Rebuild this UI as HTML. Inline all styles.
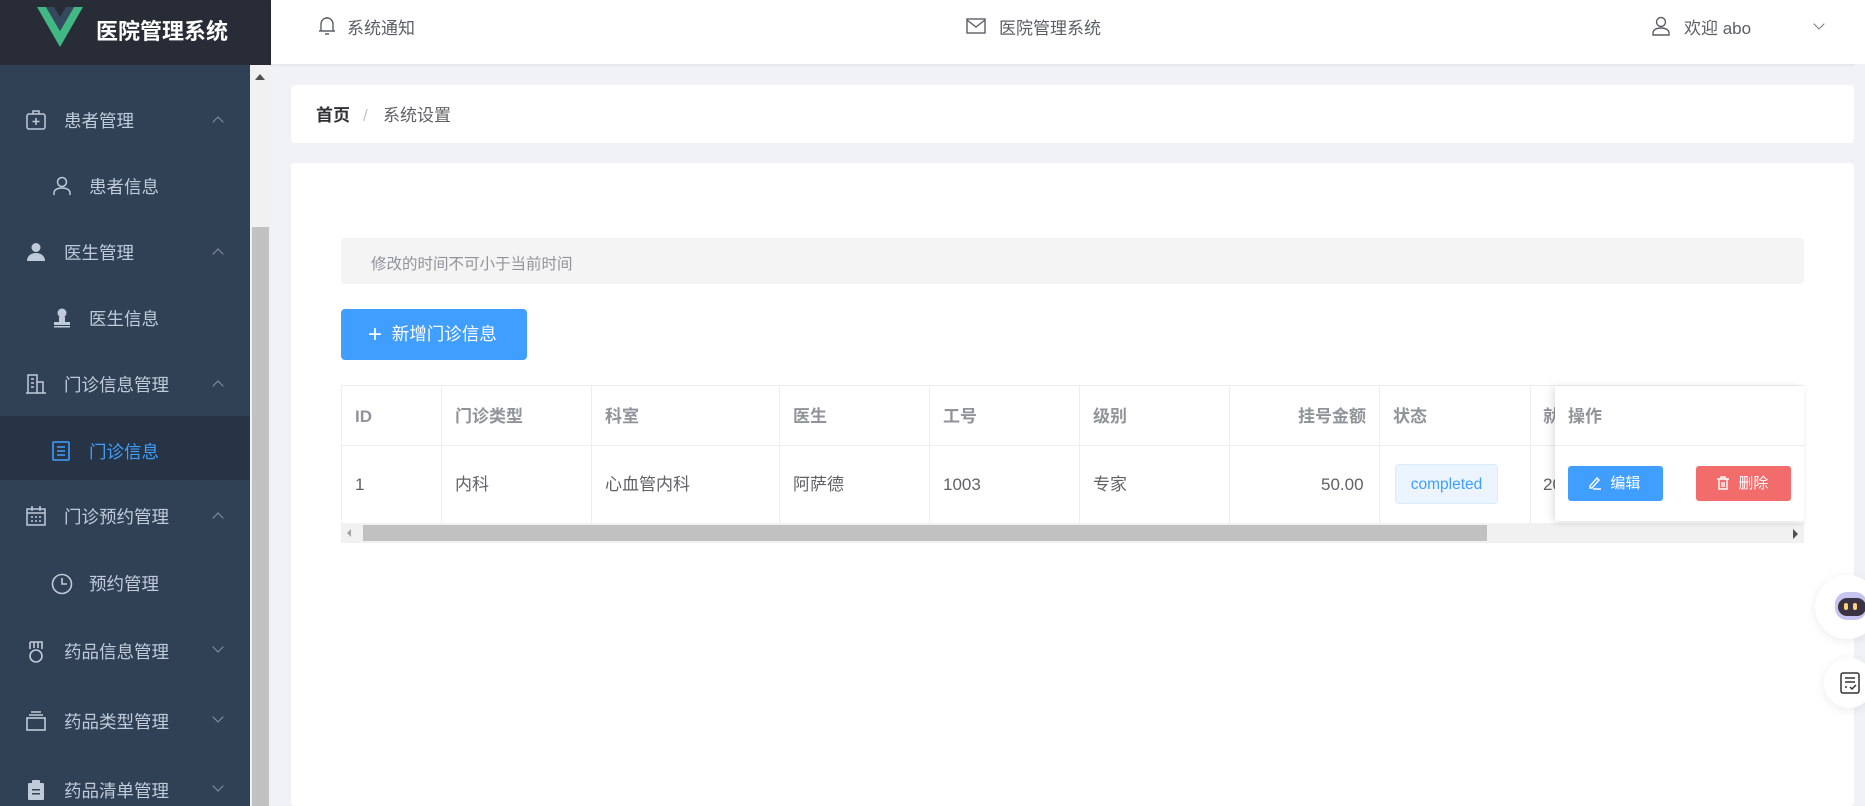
<!DOCTYPE html>
<html><head><meta charset="utf-8"><style>
*{margin:0;padding:0;box-sizing:border-box}
body{width:1865px;height:806px;overflow:hidden;background:#f0f2f5;font-family:"Liberation Sans","Noto Sans CJK SC",sans-serif;position:relative}
.abs{position:absolute}
.side{left:0;top:0;width:271px;height:806px;background:#304156}
.logo{left:0;top:0;width:271px;height:65px;background:#282c37}
.logo .t{left:96px;top:14px;color:#fff;font-weight:bold;font-size:22px;white-space:nowrap}
.mi{position:absolute;left:0;width:250px;color:#bfcbd9;font-size:17.5px;white-space:nowrap}
.mi span{position:absolute;top:-11px;line-height:24px}
.mi svg{position:absolute;top:-10px}
.arr{position:absolute;left:214px;top:-6px;width:8px;height:8px;border-left:1.2px solid #8a96a6;border-top:1.2px solid #8a96a6}
.up{transform:rotate(45deg);top:-2px}
.dn{transform:rotate(225deg);top:-8px}
.hdr{left:271px;top:0;width:1594px;height:64px;background:#fff;box-shadow:0 1px 4px rgba(0,21,41,.08)}
.ht{color:#5a5e66;font-size:17px;white-space:nowrap;line-height:24px;top:17px}
.card{background:#fff;border-radius:4px}
.th{position:absolute;top:405px;line-height:24px;font-weight:bold;color:#909399;font-size:17px;white-space:nowrap}
.td{position:absolute;top:473px;line-height:24px;color:#606266;font-size:17px;white-space:nowrap}
.vl{position:absolute;top:385px;width:1px;height:138px;background:#ebeef5}
</style></head><body>
<div class="abs side"></div>
<div class="abs logo">
<svg class="abs" style="left:37px;top:7px" width="46" height="40" viewBox="0 0 46 40"><polygon points="0,0 9,0 23,24 37,0 46,0 23,40" fill="#41b883"/><polygon points="9,0 17,0 23,10 29,0 37,0 23,24" fill="#35495e"/></svg>
<div class="abs t">医院管理系统</div></div>
<div class="abs" style="left:250px;top:65px;width:21px;height:741px;background:#f1f1f1"></div>
<div class="abs" style="left:252px;top:227px;width:17px;height:579px;background:#c1c1c1"></div>
<div class="abs" style="left:255px;top:74px;width:0;height:0;border-left:5px solid transparent;border-right:5px solid transparent;border-bottom:6px solid #505050"></div>
<div class="abs" style="left:0;top:416px;width:250px;height:64px;background:#263445"></div>
<div class="mi" style="top:120px"><svg style="left:26px" width="20" height="20" viewBox="0 0 20 20" fill="none" stroke="#bfcbd9" stroke-width="1.5"><rect x="1" y="4" width="18" height="15" rx="2"/><path d="M7 4V1h6v3M10 8v7M6.5 11.5h7"/></svg><span style="left:64px">患者管理</span><i class="arr up"></i></div>
<div class="mi" style="top:186px"><svg style="left:52px" width="20" height="20" viewBox="0 0 20 20" fill="none" stroke="#bfcbd9" stroke-width="1.5"><circle cx="10" cy="6" r="4.5"/><path d="M2 19v-2c0-3 3-5 8-5s8 2 8 5v2"/></svg><span style="left:89px">患者信息</span></div>
<div class="mi" style="top:252px"><svg style="left:26px" width="20" height="20" viewBox="0 0 20 20" fill="#bfcbd9"><circle cx="10" cy="5.5" r="4.5"/><path d="M1 19c0-5 4-8 9-8s9 3 9 8z"/></svg><span style="left:64px">医生管理</span><i class="arr up"></i></div>
<div class="mi" style="top:318px"><svg style="left:52px" width="20" height="20" viewBox="0 0 20 20" fill="#bfcbd9"><circle cx="10" cy="5" r="4.5"/><rect x="7" y="9" width="6" height="5"/><rect x="2" y="14" width="16" height="3"/><rect x="2" y="18" width="16" height="1.5"/></svg><span style="left:89px">医生信息</span></div>
<div class="mi" style="top:384px"><svg style="left:26px" width="20" height="20" viewBox="0 0 20 20" fill="none" stroke="#bfcbd9" stroke-width="1.5"><path d="M2 19V1h9v18M11 8h6v11M0 19h20M5 5h3M5 9h3M5 13h3"/></svg><span style="left:64px">门诊信息管理</span><i class="arr up"></i></div>
<div class="mi" style="top:451px;color:#409eff"><svg style="left:52px" width="18" height="20" viewBox="0 0 18 20" fill="none" stroke="#409eff" stroke-width="1.6"><rect x="1" y="1" width="16" height="18" rx="1"/><path d="M5 6h8M5 10h8M5 14h8"/></svg><span style="left:89px">门诊信息</span></div>
<div class="mi" style="top:516px"><svg style="left:26px" width="20" height="20" viewBox="0 0 20 20" fill="none" stroke="#bfcbd9" stroke-width="1.5"><rect x="1" y="3" width="18" height="16"/><path d="M1 7h18M6 0v5M14 0v5M5 11h2M9 11h2M13 11h2M5 15h2M9 15h2M13 15h2"/></svg><span style="left:64px">门诊预约管理</span><i class="arr up"></i></div>
<div class="mi" style="top:583px"><svg style="left:51px" width="22" height="22" viewBox="0 0 22 22" fill="none" stroke="#bfcbd9" stroke-width="1.6"><circle cx="11" cy="11" r="9.5"/><path d="M11 5v6h5"/></svg><span style="left:89px">预约管理</span></div>
<div class="mi" style="top:651px"><svg style="left:28px" width="16" height="22" viewBox="0 0 16 22" fill="none" stroke="#bfcbd9" stroke-width="1.6"><path d="M2 1h12v7M2 1v7M6 1v6M10 1v6"/><circle cx="8" cy="15" r="6"/></svg><span style="left:64px">药品信息管理</span><i class="arr dn"></i></div>
<div class="mi" style="top:721px"><svg style="left:26px" width="20" height="20" viewBox="0 0 20 20" fill="none" stroke="#bfcbd9" stroke-width="1.6"><path d="M5 1h10M3 4h14"/><rect x="1" y="7" width="18" height="12"/></svg><span style="left:64px">药品类型管理</span><i class="arr dn"></i></div>
<div class="mi" style="top:790px"><svg style="left:28px" width="16" height="20" viewBox="0 0 16 20" fill="#bfcbd9"><rect x="0" y="3" width="16" height="17" rx="1"/><rect x="4" y="0" width="8" height="5" rx="1"/><path d="M4 9h8v1.5H4zM4 13h8v1.5H4z" fill="#304156"/></svg><span style="left:64px">药品清单管理</span><i class="arr dn"></i></div>
<div class="abs hdr"></div>
<svg class="abs" style="left:318px;top:16px" width="18" height="20" viewBox="0 0 18 20" fill="none" stroke="#5a5e66" stroke-width="1.4"><path d="M3 15V8a6 6 0 0 1 12 0v7M1 15h16M7 18h4M9 1v1"/></svg>
<div class="abs ht" style="left:347px">系统通知</div>
<svg class="abs" style="left:966px;top:18px" width="20" height="16" viewBox="0 0 20 16" fill="none" stroke="#5a5e66" stroke-width="1.4"><rect x="1" y="1" width="18" height="14"/><path d="M1 2l9 7 9-7"/></svg>
<div class="abs ht" style="left:999px">医院管理系统</div>
<svg class="abs" style="left:1652px;top:16px" width="18" height="20" viewBox="0 0 18 20" fill="none" stroke="#5a5e66" stroke-width="1.4"><circle cx="9" cy="6" r="4.5"/><path d="M1 19v-2c0-3 3-5 8-5s8 2 8 5v2z"/></svg>
<div class="abs ht" style="left:1684px">欢迎 abo</div>
<div class="abs" style="left:1815px;top:20px;width:8px;height:8px;border-right:1.2px solid #777;border-bottom:1.2px solid #777;transform:rotate(45deg)"></div>
<div class="abs card" style="left:291px;top:85px;width:1563px;height:58px"></div>
<div class="abs" style="left:316px;top:104px;line-height:24px;font-size:17px;font-weight:bold;color:#303133">首页</div>
<div class="abs" style="left:363px;top:104px;line-height:24px;font-size:17px;color:#c0c4cc">/</div>
<div class="abs" style="left:383px;top:104px;line-height:24px;font-size:17px;color:#606266">系统设置</div>
<div class="abs card" style="left:291px;top:163px;width:1563px;height:643px"></div>
<div class="abs" style="left:341px;top:238px;width:1463px;height:46px;background:#f4f4f5;border-radius:4px"></div>
<div class="abs" style="left:371px;top:253px;line-height:24px;font-size:15.5px;color:#909399">修改的时间不可小于当前时间</div>
<div class="abs" style="left:341px;top:309px;width:186px;height:51px;background:#409eff;border-radius:4px;color:#fff;font-size:17.5px;line-height:51px;padding-left:27px;white-space:nowrap"><span style="font-size:24px;vertical-align:-2px;font-weight:300">+</span>&nbsp; 新增门诊信息</div>
<div class="abs" style="left:341px;top:385px;width:1463px;height:158px;border:1px solid #ebeef5;border-bottom:none"></div>
<div class="abs" style="left:341px;top:445px;width:1463px;height:1px;background:#ebeef5"></div>
<div class="vl" style="left:441px"></div><div class="vl" style="left:591px"></div><div class="vl" style="left:779px"></div><div class="vl" style="left:929px"></div><div class="vl" style="left:1079px"></div><div class="vl" style="left:1229px"></div><div class="vl" style="left:1379px"></div><div class="vl" style="left:1530px"></div>
<div class="th" style="left:355px">ID</div><div class="th" style="left:455px">门诊类型</div><div class="th" style="left:605px">科室</div><div class="th" style="left:793px">医生</div><div class="th" style="left:943px">工号</div><div class="th" style="left:1093px">级别</div><div class="th" style="left:1298px">挂号金额</div><div class="th" style="left:1393px">状态</div><div class="th" style="left:1543px">就</div>
<div class="td" style="left:355px">1</div><div class="td" style="left:455px">内科</div><div class="td" style="left:605px">心血管内科</div><div class="td" style="left:793px">阿萨德</div><div class="td" style="left:943px">1003</div><div class="td" style="left:1093px">专家</div><div class="td" style="left:1321px">50.00</div><div class="td" style="left:1543px">20</div>
<div class="abs" style="left:1395px;top:464px;width:103px;height:40px;background:#ecf5ff;border:1px solid #d9ecff;border-radius:4px;color:#409eff;font-size:15.5px;line-height:39px;text-align:center">completed</div>
<div class="abs" style="left:341px;top:523px;width:1463px;height:20px;background:#f1f1f1"></div>
<div class="abs" style="left:363px;top:525px;width:1124px;height:16px;background:#c1c1c1"></div>
<div class="abs" style="left:347px;top:529px;border-top:4px solid transparent;border-bottom:4px solid transparent;border-right:4px solid #a3a3a3"></div>
<div class="abs" style="left:1793px;top:529px;border-top:5px solid transparent;border-bottom:5px solid transparent;border-left:5px solid #505050"></div>
<div class="abs" style="left:1555px;top:386px;width:249px;height:135px;background:#fff;box-shadow:-4px 0 8px rgba(0,0,0,.08),0 3px 6px rgba(0,0,0,.06)"></div>
<div class="abs" style="left:1555px;top:445px;width:249px;height:1px;background:#ebeef5"></div>
<div class="th" style="left:1568px">操作</div>
<div class="abs" style="left:1568px;top:466px;width:95px;height:35px;background:#409eff;border-radius:3px;color:#fff;font-size:15px;line-height:36px;padding-left:20px;white-space:nowrap"><svg width="14" height="14" viewBox="0 0 14 14" fill="none" stroke="#fff" stroke-width="1.4" style="vertical-align:-2px"><path d="M2 10l7-8 2 2-7 8H2zM5 13h8"/></svg>&nbsp; 编辑</div>
<div class="abs" style="left:1696px;top:466px;width:95px;height:35px;background:#f36c6c;border-radius:3px;color:#fff;font-size:15px;line-height:36px;padding-left:20px;white-space:nowrap"><svg width="14" height="14" viewBox="0 0 14 14" fill="none" stroke="#fff" stroke-width="1.4" style="vertical-align:-2px"><path d="M1 3h12M5 3V1h4v2M3 3v10h8V3M6 6v5M8 6v5"/></svg>&nbsp; 删除</div>
<div class="abs" style="left:1855px;top:64px;width:10px;height:742px;background:#f0f2f5"></div>
<div class="abs" style="left:1815px;top:575px;width:64px;height:64px;border-radius:50%;background:#fff;box-shadow:0 2px 10px rgba(0,0,0,.08)"></div>
<div class="abs" style="left:1835px;top:592px;width:32px;height:28px;border-radius:12px;background:#c8c4f0"></div>
<div class="abs" style="left:1838px;top:598px;width:28px;height:18px;border-radius:9px;background:#3a3344"></div>
<div class="abs" style="left:1844px;top:603px;width:4px;height:7px;background:#ffd27a;border-radius:2px"></div><div class="abs" style="left:1853px;top:603px;width:4px;height:7px;background:#ffd27a;border-radius:2px"></div>
<div class="abs" style="left:1824px;top:658px;width:50px;height:50px;border-radius:50%;background:#fff;box-shadow:0 2px 10px rgba(0,0,0,.08)"></div>
<svg class="abs" style="left:1840px;top:672px" width="20" height="22" viewBox="0 0 20 22" fill="none" stroke="#333" stroke-width="1.5"><rect x="1" y="1" width="18" height="20" rx="2"/><path d="M5 6h10M5 10h10M5 15h2M10 15l2 2 4-4"/></svg>
</body></html>
